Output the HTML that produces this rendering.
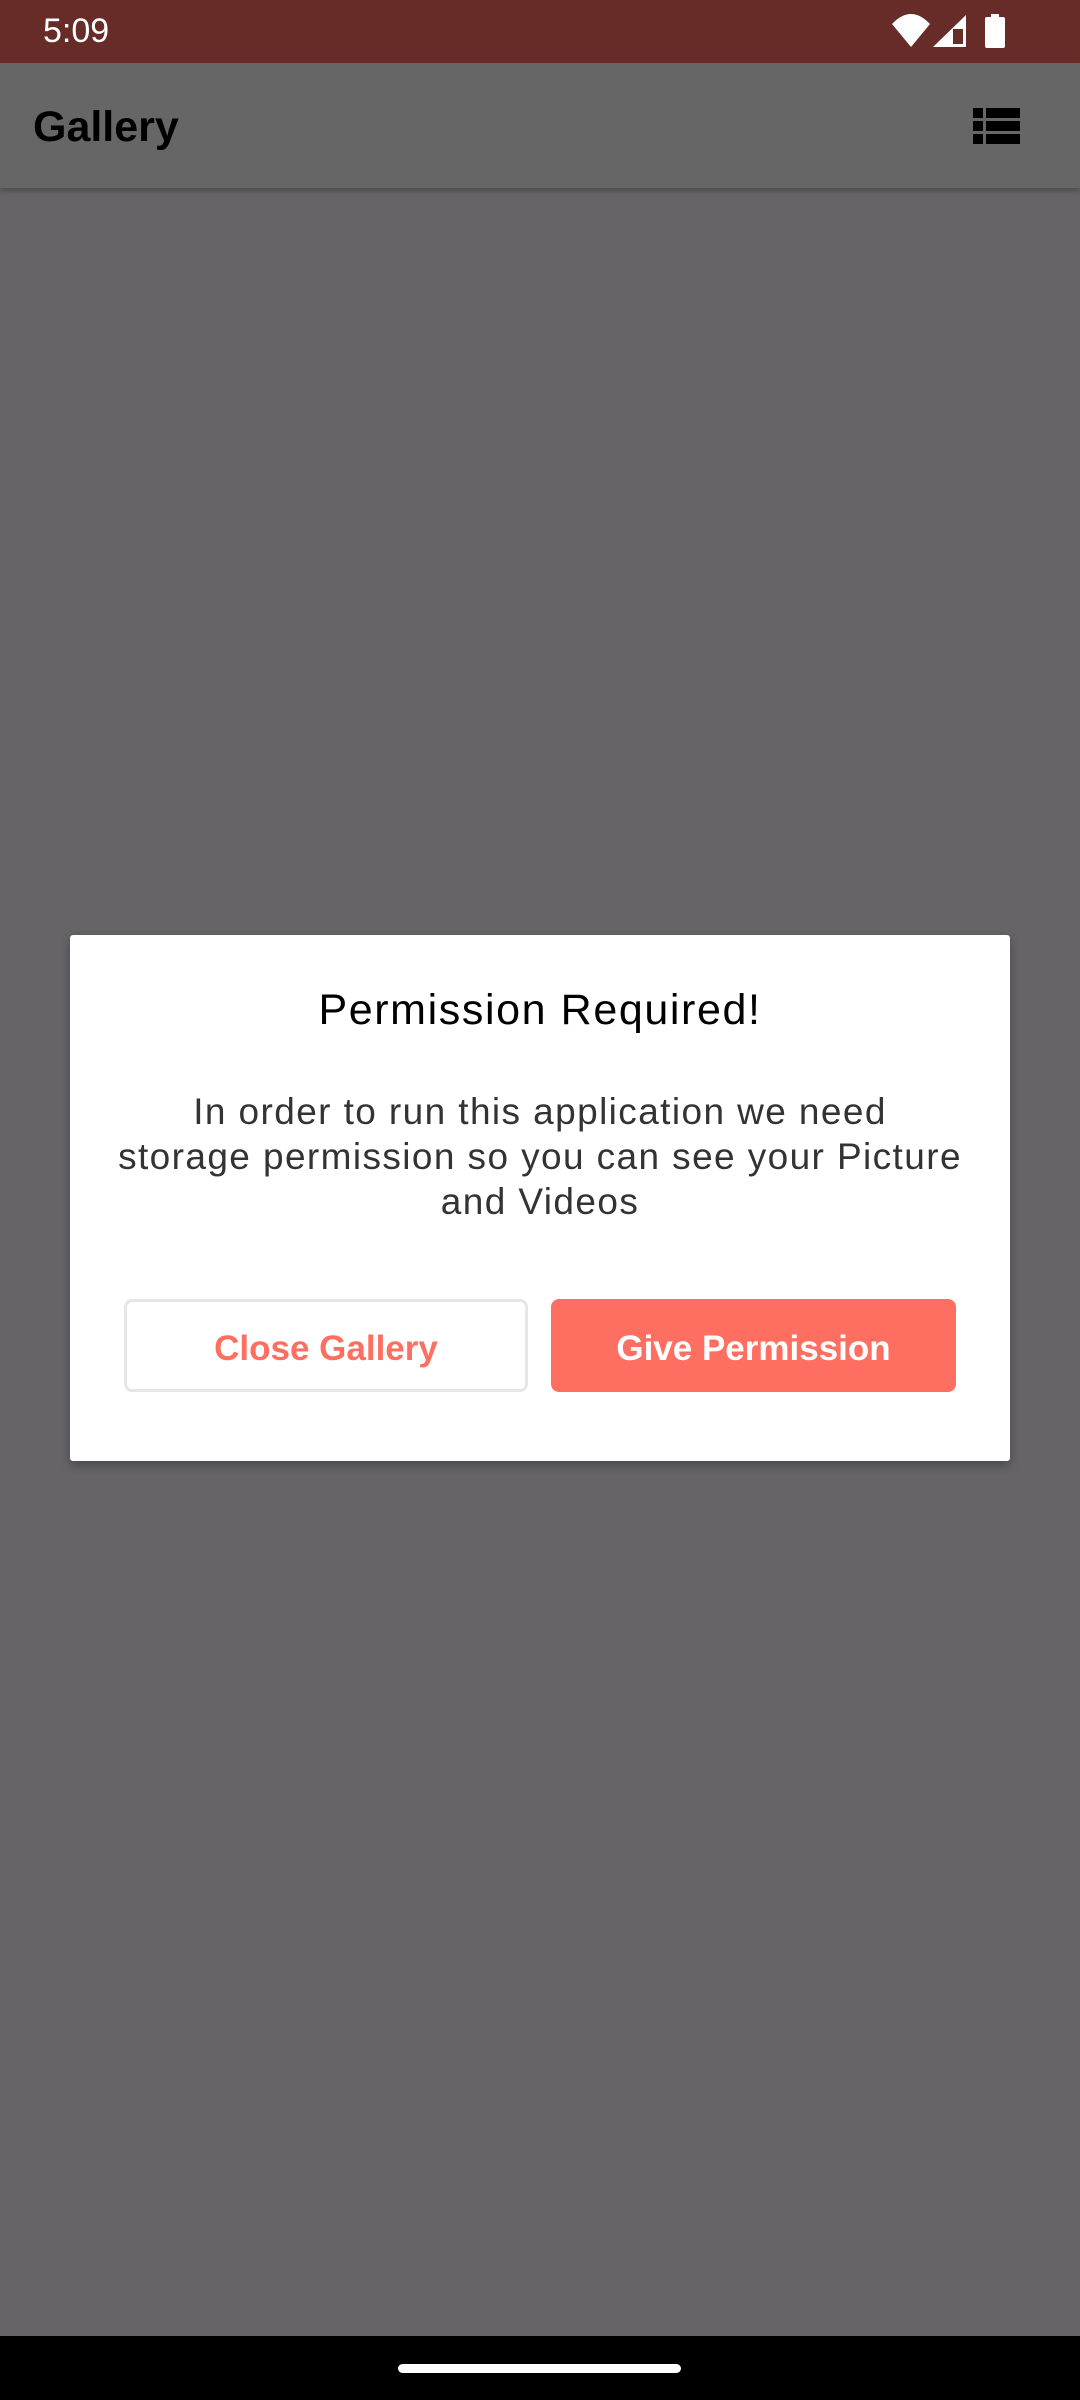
<!DOCTYPE html>
<html><head><meta charset="utf-8"><style>
html,body{margin:0;padding:0}
body{width:1080px;height:2400px;position:relative;background:#666467;font-family:"Liberation Sans",sans-serif;overflow:hidden}
.status{position:absolute;left:0;top:0;width:1080px;height:63px;background:#672b28}
.time{position:absolute;left:43px;top:12px;color:#fff;font-size:34px}
.appbar{position:absolute;left:0;top:63px;width:1080px;height:125px;background:#666666;box-shadow:0 3px 5px rgba(0,0,0,.25)}
.title{position:absolute;left:33px;top:40px;font-size:43px;font-weight:bold;color:#000}
.dialog{position:absolute;left:70px;top:935px;width:940px;height:526px;background:#fff;border-radius:3px;box-shadow:0 4px 10px rgba(0,0,0,.3)}
.dt{position:absolute;left:0;width:940px;top:51px;text-align:center;font-size:43px;letter-spacing:1.6px;color:#000}
.db{position:absolute;left:0;width:940px;top:154px;text-align:center;font-size:37px;letter-spacing:1.4px;line-height:45px;color:#333;white-space:nowrap}
.btn{position:absolute;top:364px;width:404px;height:93px;border-radius:8px;box-sizing:border-box;font-size:35px;font-weight:bold;text-align:center;line-height:99px}
.b1{left:54px;border:3px solid #e6e6e6;color:#ff6f61;line-height:93px}
.b2{left:481px;width:405px;background:#ff6f61;color:#fff}
.nav{position:absolute;left:0;top:2336px;width:1080px;height:64px;background:#000}
.pill{position:absolute;left:398px;top:28px;width:283px;height:9px;border-radius:5px;background:#fff}
</style></head><body>
<div class="status"><div class="time">5:09</div>
<svg style="position:absolute;left:885px;top:10px" width="130" height="42" viewBox="885 10 130 42">
<path d="M892 24 Q911 4 930 24 L911 47 Z" fill="#fff"/>
<path d="M966 15 L966 47 L933 47 Z" fill="#fff"/>
<path d="M953 29 L963 29 L963 44 L953 44 Z" fill="#672b28"/>
<rect x="991" y="14" width="8" height="4" fill="#fff"/>
<rect x="985" y="17" width="20" height="31" rx="2" fill="#fff"/>
</svg></div>
<div class="appbar"><div class="title">Gallery</div>
<svg style="position:absolute;left:973px;top:45px" width="47" height="37" viewBox="0 0 47 37">
<rect x="0" y="0" width="10" height="10" fill="#000"/><rect x="13" y="0" width="34" height="10" fill="#000"/>
<rect x="0" y="13" width="10" height="10" fill="#000"/><rect x="13" y="13" width="34" height="10" fill="#000"/>
<rect x="0" y="26" width="10" height="10" fill="#000"/><rect x="13" y="26" width="34" height="10" fill="#000"/>
</svg></div>
<div class="dialog">
<div class="dt">Permission Required!</div>
<div class="db">In order to run this application we need<br>storage permission so you can see your Picture<br>and Videos</div>
<div class="btn b1">Close Gallery</div>
<div class="btn b2">Give Permission</div>
</div>
<div class="nav"><div class="pill"></div></div>
</body></html>
